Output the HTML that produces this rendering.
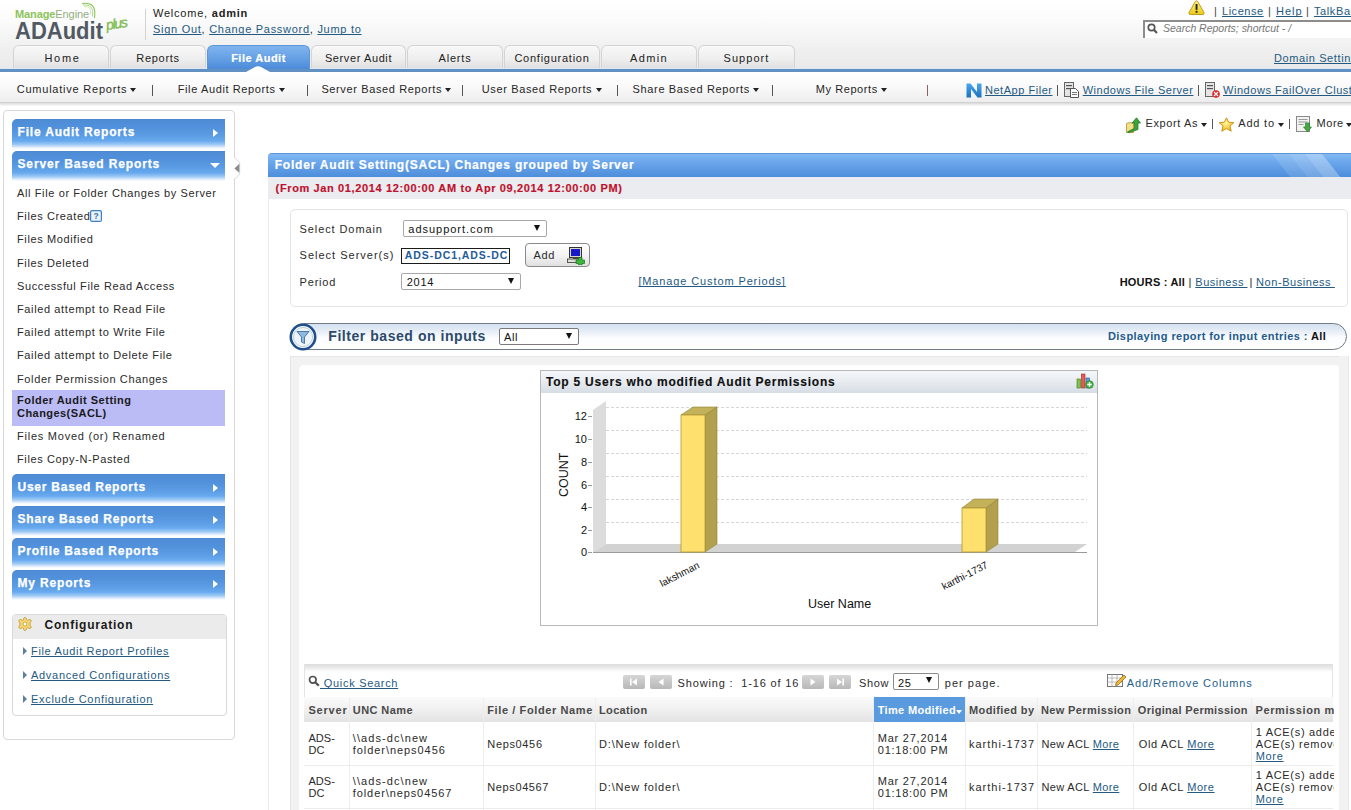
<!DOCTYPE html>
<html><head><meta charset="utf-8"><style>
*{box-sizing:border-box}
html,body{margin:0;padding:0;width:1351px;height:810px;overflow:hidden;background:#fff;font-family:"Liberation Sans",sans-serif;font-size:11px;color:#222}
.a{position:absolute}
.t{position:absolute;white-space:pre;line-height:20px}
.lk{color:#245a82;text-decoration:underline;text-decoration-skip-ink:none}
.tab{position:absolute;top:45px;height:25px;border:1px solid #d4d4d4;border-bottom:none;border-radius:6px 6px 0 0;background:linear-gradient(#f8f8f8,#eeeeee 55%,#dddddd)}
.tab.on{background:linear-gradient(#80b4ee,#69a3e6 45%,#4a89d8);border-color:#5c96dc}
.car{position:absolute;width:0;height:0;border-left:3px solid transparent;border-right:3px solid transparent;border-top:4px solid #222}
.ph{position:absolute;left:12px;width:213px;height:30px;border-radius:5px 0 0 0;background:linear-gradient(#4a82c8 0px,#4e8dd6 1px,#5190da 8px,#5c9de5 17px,#68aaee 22px,#a6cdf6 26px,#e3effc 28.5px,#ffffff 30px)}
.arr{position:absolute;width:0;height:0;border-top:4.5px solid transparent;border-bottom:4.5px solid transparent;border-left:5px solid #fff}
.sa{position:absolute;width:0;height:0;border-top:4px solid transparent;border-bottom:4px solid transparent;border-left:4px solid #5f7f9f}
.sel{position:absolute;border:1px solid #a8a8a8;border-radius:2px;background:#fff}
.dn{position:absolute;width:0;height:0;border-left:3.5px solid transparent;border-right:3.5px solid transparent;border-top:6px solid #111}
.pb{position:absolute;top:675px;width:22px;height:14px;border-radius:2px;background:linear-gradient(#d6d6d6,#b8b8b8)}
.pb svg{display:block}
.cv{position:absolute;top:698px;width:1px;height:112px;background:#ededed}
</style></head><body>
<div class="a" style="left:0;top:0;width:1351px;height:71px;background:linear-gradient(#ffffff 0px,#fcfcfc 18px,#efefef 50px,#e9e9e9 70px)"></div>
<div class="t" style="left:15px;top:4px;font-size:11px;letter-spacing:-0.1px"><span style="color:#8cc35a;font-weight:bold">Manage</span><span style="color:#93ad82">Engine</span></div>
<svg class="a" style="left:80px;top:1px" width="20" height="20" viewBox="0 0 20 20"><path d="M2 2.5 Q17 0 14.5 17" stroke="#8cc35a" stroke-width="1.1" fill="none"/><path d="M3 4 Q14.5 2.5 12.5 15.5" stroke="#a9d383" stroke-width="0.9" fill="none"/><path d="M4 5.5 Q12 5 10.5 13.5" stroke="#c4e2a6" stroke-width="0.8" fill="none"/></svg>
<div class="t" style="left:15px;top:19px;font-size:22px;line-height:26px;font-weight:bold;color:#515a63;transform:scaleY(1.08);transform-origin:0 100%">ADAudit</div>
<div class="t" style="left:106px;top:15px;font-size:14px;font-style:italic;color:#7cbd50;letter-spacing:-1.3px;-webkit-text-stroke:0.35px #7cbd50;transform:rotate(-9deg);transform-origin:0 50%">plus</div>
<div class="a" style="left:145px;top:9px;width:1px;height:31px;background:#d2d2d2"></div>
<div class="t" style="left:153px;top:3px;font-size:11px;color:#222;letter-spacing:0.78px;">Welcome, <b>admin</b></div>
<div class="t" style="left:153px;top:19px;font-size:11px;color:#2a2a2a;letter-spacing:0.72px;"><span class="lk">Sign Out</span>, <span class="lk">Change Password</span>, <span class="lk">Jump to</span></div>
<svg class="a" style="left:1188px;top:0px" width="17" height="15" viewBox="0 0 17 15"><defs><linearGradient id="wg" x1="0" y1="0" x2="0" y2="1"><stop offset="0" stop-color="#fff27a"/><stop offset="1" stop-color="#e9c91a"/></linearGradient></defs><path d="M8.5 0.8 Q9.3 0.8 9.8 1.7 L16 12.6 Q16.6 14.4 14.8 14.5 L2.2 14.5 Q0.4 14.4 1 12.6 L7.2 1.7 Q7.7 0.8 8.5 0.8 Z" fill="url(#wg)" stroke="#b8960c" stroke-width="0.9"/><rect x="7.6" y="4" width="1.9" height="5.8" fill="#222"/><rect x="7.6" y="10.8" width="1.9" height="1.9" fill="#222"/></svg>
<div class="t" style="left:1214px;top:1px;font-size:11px;color:#444;">|</div>
<div class="t lk" style="left:1222px;top:1px;font-size:11px;letter-spacing:0.53px;">License</div>
<div class="t" style="left:1268px;top:1px;font-size:11px;color:#444;">|</div>
<div class="t lk" style="left:1276px;top:1px;font-size:11px;letter-spacing:0.99px;">Help</div>
<div class="t" style="left:1306px;top:1px;font-size:11px;color:#444;">|</div>
<div class="t lk" style="left:1314px;top:1px;font-size:11px;letter-spacing:0.6px;">TalkBack</div>
<div class="a" style="left:1143px;top:20px;width:220px;height:18px;background:#fff;border-top:2px solid #8c8c8c;border-left:2px solid #8c8c8c"></div>
<svg class="a" style="left:1147px;top:23px" width="11" height="11" viewBox="0 0 11 11"><circle cx="4.5" cy="4.5" r="3.2" stroke="#555" stroke-width="1.7" fill="none"/><path d="M6.8 6.8 L10 10" stroke="#555" stroke-width="2.2"/></svg>
<div class="t" style="left:1163px;top:18px;font-size:10.5px;color:#777;letter-spacing:-0.01px;font-style:italic;">Search Reports; shortcut - /</div>
<div class="tab" style="left:13px;width:96px"></div>
<div class="t" style="left:14.5px;width:96px;top:48px;text-align:center;font-size:11px;color:#222;letter-spacing:1.7px">Home</div>
<div class="tab" style="left:110px;width:96px"></div>
<div class="t" style="left:110px;width:96px;top:48px;text-align:center;font-size:11px;color:#222;letter-spacing:0.7px">Reports</div>
<div class="tab on" style="left:207px;width:103px"></div>
<div class="t" style="left:207px;width:103px;top:48px;text-align:center;font-size:11px;font-weight:bold;color:#fff;letter-spacing:0.5px;-webkit-text-stroke:0.2px #fff">File Audit</div>
<div class="tab" style="left:311px;width:95px"></div>
<div class="t" style="left:311px;width:95px;top:48px;text-align:center;font-size:11px;color:#222;letter-spacing:0.6px">Server Audit</div>
<div class="tab" style="left:407px;width:96px"></div>
<div class="t" style="left:407px;width:96px;top:48px;text-align:center;font-size:11px;color:#222;letter-spacing:0.8px">Alerts</div>
<div class="tab" style="left:504px;width:96px"></div>
<div class="t" style="left:504px;width:96px;top:48px;text-align:center;font-size:11px;color:#222;letter-spacing:0.75px">Configuration</div>
<div class="tab" style="left:601px;width:96px"></div>
<div class="t" style="left:601px;width:96px;top:48px;text-align:center;font-size:11px;color:#222;letter-spacing:1.4px">Admin</div>
<div class="tab" style="left:698px;width:97px"></div>
<div class="t" style="left:698px;width:97px;top:48px;text-align:center;font-size:11px;color:#222;letter-spacing:1.05px">Support</div>
<div class="t lk" style="left:1274px;top:48px;font-size:11px;letter-spacing:0.6px;">Domain Settings</div>
<div class="a" style="left:0;top:68px;width:207px;height:1px;background:#dce8f8"></div><div class="a" style="left:310px;top:68px;width:1041px;height:1px;background:#dce8f8"></div><div class="a" style="left:0;top:69px;width:1351px;height:3px;background:#6190c2"></div>
<div class="a" style="left:0;top:72px;width:1351px;height:31px;background:linear-gradient(#ffffff,#fafafa 45%,#ececec)"></div>
<div class="a" style="left:0;top:102px;width:1351px;height:4px;background:linear-gradient(#c9c9c9,#e6e6e6 50%,#fafafa)"></div>
<svg class="a" style="left:245px;top:66px" width="26" height="6" viewBox="0 0 26 6"><path d="M1 6 L9.5 1.2 Q13 -0.6 16.5 1.2 L25 6 Z" fill="#fff"/></svg>
<div class="t" style="left:16.7px;top:79px;font-size:11px;color:#262626;letter-spacing:0.78px;">Cumulative Reports</div>
<div class="car" style="left:130px;top:88px"></div>
<div class="t" style="left:177.7px;top:79px;font-size:11px;color:#262626;letter-spacing:0.62px;">File Audit Reports</div>
<div class="car" style="left:278.5px;top:88px"></div>
<div class="t" style="left:321.4px;top:79px;font-size:11px;color:#262626;letter-spacing:0.62px;">Server Based Reports</div>
<div class="car" style="left:444.5px;top:88px"></div>
<div class="t" style="left:481.7px;top:79px;font-size:11px;color:#262626;letter-spacing:0.64px;">User Based Reports</div>
<div class="car" style="left:595.5px;top:88px"></div>
<div class="t" style="left:632.6px;top:79px;font-size:11px;color:#262626;letter-spacing:0.64px;">Share Based Reports</div>
<div class="car" style="left:753px;top:88px"></div>
<div class="t" style="left:815.8px;top:79px;font-size:11px;color:#262626;letter-spacing:0.57px;">My Reports</div>
<div class="car" style="left:881px;top:88px"></div>
<div class="a" style="left:152px;top:85px;width:1px;height:11px;background:#555"></div>
<div class="a" style="left:306.5px;top:85px;width:1px;height:11px;background:#555"></div>
<div class="a" style="left:462px;top:85px;width:1px;height:11px;background:#555"></div>
<div class="a" style="left:617px;top:85px;width:1px;height:11px;background:#555"></div>
<div class="a" style="left:771.5px;top:85px;width:1px;height:11px;background:#555"></div>
<div class="a" style="left:927px;top:85px;width:1px;height:11px;background:#8a6464"></div>
<svg class="a" style="left:966px;top:83px" width="16" height="15" viewBox="0 0 16 15"><defs><linearGradient id="ng" x1="0" y1="0" x2="0" y2="1"><stop offset="0" stop-color="#4aa8ec"/><stop offset="1" stop-color="#1d6fbf"/></linearGradient></defs><path d="M0.5 0.5 H4.5 L11 9 V0.5 H15.5 V14.5 H11.5 L5 6 V14.5 H0.5 Z" fill="url(#ng)"/></svg>
<div class="t lk" style="left:985px;top:80px;font-size:11px;letter-spacing:0.53px;">NetApp Filer</div>
<div class="a" style="left:1057px;top:85px;width:1px;height:11px;background:#555"></div>
<svg class="a" style="left:1063px;top:82px" width="16" height="16" viewBox="0 0 16 16"><rect x="1.5" y="0.5" width="9" height="14" fill="#e4e4e4" stroke="#666"/><rect x="3" y="3" width="6" height="1.2" fill="#555"/><rect x="3" y="6" width="6" height="1.2" fill="#555"/><path d="M7.5 6.5 H12.5 L15.5 9.5 V15.5 H7.5 Z" fill="#fff" stroke="#555"/><rect x="9" y="10" width="5" height="1" fill="#777"/><rect x="9" y="12" width="5" height="1" fill="#777"/></svg>
<div class="t lk" style="left:1082.7px;top:80px;font-size:11px;letter-spacing:0.52px;">Windows File Server</div>
<div class="a" style="left:1198px;top:85px;width:1px;height:11px;background:#555"></div>
<svg class="a" style="left:1204px;top:82px" width="16" height="16" viewBox="0 0 16 16"><rect x="1.5" y="0.5" width="9" height="14" fill="#e4e4e4" stroke="#666"/><rect x="3" y="3" width="6" height="1.2" fill="#555"/><rect x="3" y="6" width="6" height="1.2" fill="#555"/><circle cx="12" cy="12" r="3.8" fill="#e02020"/><path d="M10 10 L14 14 M14 10 L10 14" stroke="#fff" stroke-width="1.3"/></svg>
<div class="t lk" style="left:1223px;top:80px;font-size:11px;letter-spacing:0.55px;">Windows FailOver Cluster</div>
<div class="a" style="left:3px;top:110px;width:232px;height:630px;border:1px solid #d8d8d8;border-radius:4px;background:#fff"></div>
<svg class="a" style="left:233px;top:156px" width="9" height="25" viewBox="0 0 9 25"><path d="M0.8 1.3 L6.7 6.6 L6.7 18 L0.8 23.3 Z" fill="#fff"/><path d="M1.5 1.3 L6.7 6.6 L6.7 18 L1.5 23.3" fill="none" stroke="#d8d8d8" stroke-width="1"/><path d="M1.4 12.5 L6.3 7.8 L6.3 16.8 Z" fill="#8c8c8c"/></svg>
<div class="ph" style="top:119px"></div>
<div class="t" style="left:17.5px;top:122px;font-size:12px;color:#fff;font-weight:bold;letter-spacing:0.82px;-webkit-text-stroke:0.25px #fff;">File Audit Reports</div>
<div class="arr" style="left:213px;top:129px"></div>
<div class="ph" style="top:151px"></div>
<div class="t" style="left:17.5px;top:154px;font-size:12px;color:#fff;font-weight:bold;letter-spacing:0.86px;-webkit-text-stroke:0.25px #fff;">Server Based Reports</div>
<div class="a" style="left:210px;top:163px;width:0;height:0;border-left:5px solid transparent;border-right:5px solid transparent;border-top:5.5px solid #fff"></div>
<div class="t" style="left:17px;top:183px;font-size:11px;color:#2a2a2a;letter-spacing:0.62px;">All File or Folder Changes by Server</div>
<div class="t" style="left:17px;top:206px;font-size:11px;color:#2a2a2a;letter-spacing:0.62px;">Files Created</div>
<div class="t" style="left:17px;top:229px;font-size:11px;color:#2a2a2a;letter-spacing:0.62px;">Files Modified</div>
<div class="t" style="left:17px;top:253px;font-size:11px;color:#2a2a2a;letter-spacing:0.62px;">Files Deleted</div>
<div class="t" style="left:17px;top:276px;font-size:11px;color:#2a2a2a;letter-spacing:0.62px;">Successful File Read Access</div>
<div class="t" style="left:17px;top:299px;font-size:11px;color:#2a2a2a;letter-spacing:0.62px;">Failed attempt to Read File</div>
<div class="t" style="left:17px;top:322px;font-size:11px;color:#2a2a2a;letter-spacing:0.62px;">Failed attempt to Write File</div>
<div class="t" style="left:17px;top:345px;font-size:11px;color:#2a2a2a;letter-spacing:0.62px;">Failed attempt to Delete File</div>
<div class="t" style="left:17px;top:369px;font-size:11px;color:#2a2a2a;letter-spacing:0.62px;">Folder Permission Changes</div>
<svg class="a" style="left:90px;top:210px" width="12" height="12" viewBox="0 0 12 12"><rect x="0.6" y="0.6" width="10.8" height="10.8" rx="1.5" fill="#eaf3fc" stroke="#3f7fc0" stroke-width="1.2"/><text x="6" y="9.2" font-size="8.5" font-weight="bold" fill="#3f6f9f" text-anchor="middle" font-family="Liberation Sans">?</text></svg>
<div class="a" style="left:12px;top:390px;width:213px;height:36px;background:#bbbbf6"></div>
<div class="t" style="left:17px;top:390px;font-size:11px;color:#1a1a1a;font-weight:bold;letter-spacing:0.49px;">Folder Audit Setting</div>
<div class="t" style="left:17px;top:403px;font-size:11px;color:#1a1a1a;font-weight:bold;letter-spacing:0.45px;">Changes(SACL)</div>
<div class="t" style="left:17px;top:426px;font-size:11px;color:#2a2a2a;letter-spacing:0.76px;">Files Moved (or) Renamed</div>
<div class="t" style="left:17px;top:449px;font-size:11px;color:#2a2a2a;letter-spacing:0.62px;">Files Copy-N-Pasted</div>
<div class="ph" style="top:474px"></div>
<div class="t" style="left:17.5px;top:477px;font-size:12px;color:#fff;font-weight:bold;letter-spacing:0.76px;-webkit-text-stroke:0.25px #fff;">User Based Reports</div>
<div class="arr" style="left:213px;top:484px"></div>
<div class="ph" style="top:506px"></div>
<div class="t" style="left:17.5px;top:509px;font-size:12px;color:#fff;font-weight:bold;letter-spacing:0.81px;-webkit-text-stroke:0.25px #fff;">Share Based Reports</div>
<div class="arr" style="left:213px;top:516px"></div>
<div class="ph" style="top:538px"></div>
<div class="t" style="left:17.5px;top:541px;font-size:12px;color:#fff;font-weight:bold;letter-spacing:0.77px;-webkit-text-stroke:0.25px #fff;">Profile Based Reports</div>
<div class="arr" style="left:213px;top:548px"></div>
<div class="ph" style="top:570px"></div>
<div class="t" style="left:17.5px;top:573px;font-size:12px;color:#fff;font-weight:bold;letter-spacing:0.83px;-webkit-text-stroke:0.25px #fff;">My Reports</div>
<div class="arr" style="left:213px;top:580px"></div>
<div class="a" style="left:12px;top:614px;width:215px;height:102px;border:1px solid #d9d9d9;border-radius:4px;background:#fff;overflow:hidden"><div style="height:24px;background:#ebebeb"></div></div>
<svg class="a" style="left:17.5px;top:616.5px" width="14" height="14" viewBox="0 0 15 15"><g transform="translate(7.5 7.5) scale(0.95)"><path d="M-1.6 -6.2 A1.7 1.7 0 0 1 1.6 -6.2 L1.9 -4.6 L3.3 -4 L4.6 -5 A1.7 1.7 0 0 1 6.8 -2.7 L5.8 -1.5 L5.8 1.5 L6.8 2.7 A1.7 1.7 0 0 1 4.6 5 L3.3 4 L1.9 4.6 L1.6 6.2 A1.7 1.7 0 0 1 -1.6 6.2 L-1.9 4.6 L-3.3 4 L-4.6 5 A1.7 1.7 0 0 1 -6.8 2.7 L-5.8 1.5 L-5.8 -1.5 L-6.8 -2.7 A1.7 1.7 0 0 1 -4.6 -5 L-3.3 -4 L-1.9 -4.6 Z" fill="#f3d673" stroke="#c39a2a" stroke-width="0.9"/><circle r="2.2" fill="#fff" stroke="#c39a2a" stroke-width="0.9"/></g></svg>
<div class="t" style="left:44.5px;top:615px;font-size:12px;color:#1a1a1a;font-weight:bold;letter-spacing:0.78px;">Configuration</div>
<div class="sa" style="left:23px;top:647px"></div>
<div class="t lk" style="left:31px;top:641px;font-size:11px;letter-spacing:0.66px;">File Audit Report Profiles</div>
<div class="sa" style="left:23px;top:671px"></div>
<div class="t lk" style="left:31px;top:665px;font-size:11px;letter-spacing:0.71px;">Advanced Configurations</div>
<div class="sa" style="left:23px;top:695px"></div>
<div class="t lk" style="left:31px;top:689px;font-size:11px;letter-spacing:0.69px;">Exclude Configuration</div>
<svg class="a" style="left:1126px;top:117px" width="15" height="16" viewBox="0 0 15 16"><path d="M0.5 6.5 L4 5.5 L7.5 6.5 L7.5 15.5 L0.5 15.5 Z" fill="#f3e08a" stroke="#a8902a" stroke-width="0.8"/><path d="M1.5 15 Q4 13 8.5 11.5 L8.5 6 L6 6 L10.5 0.8 L14.5 6 L12 6 L12 12.5 Q8 14 3 15.5 Z" fill="#3aa63a" stroke="#1d6e1d" stroke-width="0.7" stroke-linejoin="round"/></svg>
<div class="t" style="left:1145.6px;top:113px;font-size:11px;color:#2a2a2a;letter-spacing:0.59px;">Export As</div>
<div class="car" style="left:1201px;top:123px"></div>
<div class="a" style="left:1212px;top:119px;width:1px;height:10px;background:#555"></div>
<svg class="a" style="left:1218px;top:117px" width="17" height="15" viewBox="0 0 17 15"><defs><radialGradient id="sg" cx="0.45" cy="0.4" r="0.6"><stop offset="0" stop-color="#fff7a0"/><stop offset="1" stop-color="#f2b81a"/></radialGradient></defs><path d="M8.5 0.8 L10.7 5.2 L15.8 5.7 L12 9 L13.2 14.2 L8.5 11.6 L3.8 14.2 L5 9 L1.2 5.7 L6.3 5.2 Z" fill="url(#sg)" stroke="#c98a10" stroke-width="0.9" stroke-linejoin="round"/></svg>
<div class="t" style="left:1238.3px;top:113px;font-size:11px;color:#2a2a2a;letter-spacing:0.78px;">Add to</div>
<div class="car" style="left:1278px;top:123px"></div>
<div class="a" style="left:1289px;top:119px;width:1px;height:10px;background:#555"></div>
<svg class="a" style="left:1296px;top:116px" width="16" height="17" viewBox="0 0 16 17"><rect x="0.5" y="0.5" width="13" height="15" fill="#f2f2f2" stroke="#888"/><rect x="2.5" y="3" width="9" height="1" fill="#9a9a9a"/><rect x="2.5" y="5.5" width="9" height="1" fill="#9a9a9a"/><rect x="2.5" y="8" width="5" height="1" fill="#9a9a9a"/><path d="M9.5 7 H13.5 V11 H15.5 L11.5 16 L7.5 11 H9.5 Z" fill="#45a845" stroke="#237a23" stroke-width="0.6"/></svg>
<div class="t" style="left:1316.6px;top:113px;font-size:11px;color:#2a2a2a;letter-spacing:0.51px;">More</div>
<div class="car" style="left:1346px;top:123px"></div>
<div class="a" style="left:268px;top:153px;width:1083px;height:24px;border-radius:4px 0 0 0;border-top:1px solid #5f95d6;background:linear-gradient(#82b9f2,#6ca7ec 35%,#4d8dda);overflow:hidden"><svg style="position:absolute;left:1004px;top:0" width="79" height="24" viewBox="0 0 79 24"><path d="M0 0 H17 L36 24 H19 Z" fill="#fff" fill-opacity="0.13"/><path d="M17 0 H33 L52 24 H36 Z" fill="#fff" fill-opacity="0.2"/><path d="M33 0 H50 L69 24 H52 Z" fill="#fff" fill-opacity="0.3"/></svg></div>
<div class="t" style="left:274.7px;top:155px;font-size:12px;color:#fff;font-weight:bold;letter-spacing:0.80px;-webkit-text-stroke:0.2px #fff;">Folder Audit Setting(SACL) Changes grouped by Server</div>
<div class="a" style="left:268px;top:177px;width:1083px;height:22px;background:#ebecf0"></div>
<div class="t" style="left:275.6px;top:178px;font-size:11px;color:#c0102c;font-weight:bold;letter-spacing:0.63px;-webkit-text-stroke:0.15px #c0102c;">(From Jan 01,2014 12:00:00 AM to Apr 09,2014 12:00:00 PM)</div>
<div class="a" style="left:268px;top:199px;width:1px;height:611px;background:#ebebeb"></div>
<div class="a" style="left:290px;top:209px;width:1058px;height:98px;border:1px solid #e4e4e4;border-radius:5px;background:#fff"></div>
<div class="t" style="left:299.6px;top:218.5px;font-size:11px;color:#2a2a2a;letter-spacing:0.90px;">Select Domain</div>
<div class="sel" style="left:403px;top:220px;width:144px;height:17px"></div>
<div class="t" style="left:408.3px;top:219px;font-size:11px;color:#111;letter-spacing:0.98px;">adsupport.com</div>
<div class="dn" style="left:533.5px;top:224.5px"></div>
<div class="t" style="left:299.6px;top:245px;font-size:11px;color:#2a2a2a;letter-spacing:1.00px;">Select Server(s)</div>
<div class="a" style="left:401px;top:248px;width:109px;height:16px;border:1.5px solid #1b1b1b;background:#fff;overflow:hidden"></div>
<div class="t" style="left:404.8px;top:245px;font-size:10.5px;color:#1f5b98;font-weight:bold;letter-spacing:0.93px;">ADS-DC1,ADS-DC</div>
<div class="a" style="left:525px;top:243px;width:65px;height:24px;border:1px solid #8a8a8a;border-radius:4px;background:linear-gradient(#ffffff,#f4f4f4 50%,#e0e0e0)"></div>
<div class="t" style="left:533.4px;top:245px;font-size:11px;color:#2a2a2a;letter-spacing:0.66px;">Add</div>
<svg class="a" style="left:567px;top:247px" width="19" height="18" viewBox="0 0 19 18"><rect x="2.5" y="0.5" width="12" height="10" fill="#d8d8c8" stroke="#333"/><rect x="4" y="2" width="9" height="7" fill="#1818c8"/><rect x="6" y="10.5" width="5" height="1.5" fill="#555"/><rect x="0.5" y="12" width="13" height="3.5" fill="#e0e0d8" stroke="#333" stroke-width="0.8"/><path d="M11.5 10.5 H15 V13 H17.5 V16.5 H15 V18 H11.5 V16.5 H9 V13 H11.5 Z" fill="#3cb83c" stroke="#1b6e1b" stroke-width="0.7"/></svg>
<div class="t" style="left:299.6px;top:271.5px;font-size:11px;color:#2a2a2a;letter-spacing:0.80px;">Period</div>
<div class="sel" style="left:401px;top:273px;width:120px;height:17px"></div>
<div class="t" style="left:406.8px;top:271.5px;font-size:11px;color:#111;letter-spacing:0.7px;">2014</div>
<div class="dn" style="left:507.5px;top:277.5px"></div>
<div class="t lk" style="left:638.4px;top:271px;font-size:11px;letter-spacing:0.88px;">[Manage Custom Periods]</div>
<div class="t" style="left:1119.7px;top:272px;font-size:11px;color:#111;font-weight:bold;letter-spacing:0.20px;">HOURS : All</div>
<div class="t" style="left:1188.5px;top:272px;font-size:11px;color:#222;">|</div>
<div class="t" style="left:1195.3px;top:272px;font-size:11px;color:#2a2a2a;letter-spacing:0.5px;"><span class="lk">Business </span></div>
<div class="t" style="left:1249.5px;top:272px;font-size:11px;color:#222;">|</div>
<div class="t" style="left:1256.1px;top:272px;font-size:11px;color:#2a2a2a;letter-spacing:0.55px;"><span class="lk">Non-Business </span></div>
<div class="a" style="left:290px;top:323px;width:1057px;height:27px;border:1px solid #737b85;border-radius:14px;background:linear-gradient(#d4e1f0,#e3ebf5 25%,#fbfcfe 55%,#ffffff)"></div>
<svg class="a" style="left:289px;top:323px" width="28" height="28" viewBox="0 0 28 28"><circle cx="14" cy="14" r="12.2" fill="#fff" stroke="#1f4f8c" stroke-width="2.6"/><circle cx="14" cy="14" r="9.6" fill="#eef4fa" stroke="#a9c2dc" stroke-width="0.8"/><path d="M8 8.5 H20 L15.5 14 V20.5 L12.5 19 V14 Z" fill="#8fb9e4" stroke="#3f6f9f" stroke-width="0.9" stroke-linejoin="round"/></svg>
<div class="t" style="left:328.3px;top:326px;font-size:14px;color:#2b4a6c;font-weight:bold;letter-spacing:0.55px;">Filter based on inputs</div>
<div class="sel" style="left:499px;top:328px;width:80px;height:17px;border-color:#7a7a7a"></div>
<div class="t" style="left:504px;top:327px;font-size:11px;color:#111;letter-spacing:0.6px;">All</div>
<div class="dn" style="left:566px;top:332.5px"></div>
<div class="t" style="left:1108px;top:325.5px;font-size:11px;color:#235a8e;font-weight:bold;letter-spacing:0.43px;">Displaying report for input entries : <span style="color:#111">All</span></div>
<div class="a" style="left:290px;top:356px;width:1059px;height:470px;border:1px solid #e6e6e6;background:#f2f2f2"></div>
<div class="a" style="left:299px;top:365px;width:1041px;height:460px;border-radius:5px;background:#fff"></div>
<div class="a" style="left:540px;top:370px;width:558px;height:256px;border:1px solid #b8b8b8;background:#fff"></div>
<div class="a" style="left:541px;top:371px;width:556px;height:22px;background:linear-gradient(#f5f7fa,#e6eaef 55%,#d7dde5)"></div>
<div class="t" style="left:546px;top:372px;font-size:12px;color:#111;font-weight:bold;letter-spacing:0.78px;-webkit-text-stroke:0.15px #111;">Top 5 Users who modified Audit Permissions</div>
<svg class="a" style="left:1076px;top:373px" width="18" height="16" viewBox="0 0 18 16"><rect x="1" y="6" width="3.5" height="9" fill="#7fc24a" stroke="#3d7d1f" stroke-width="0.6"/><rect x="5.5" y="1" width="3.5" height="14" fill="#e65c4f" stroke="#9b2b22" stroke-width="0.6"/><rect x="10" y="5" width="3.5" height="10" fill="#5aa0e0" stroke="#2a5f9a" stroke-width="0.6"/><circle cx="13.5" cy="11.5" r="3.8" fill="#48b448" stroke="#1e7a1e" stroke-width="0.6"/><path d="M13.5 9.3 V13.7 M11.3 11.5 H15.7" stroke="#fff" stroke-width="1.3"/></svg>
<svg class="a" style="left:541px;top:393px" width="556" height="232" viewBox="541 393 556 232">
 <g stroke="#d6d6d6" stroke-width="1" stroke-dasharray="3,2">
  <line x1="606" y1="407.5" x2="1087" y2="407.5"/><line x1="606" y1="430.5" x2="1087" y2="430.5"/><line x1="606" y1="453.5" x2="1087" y2="453.5"/>
  <line x1="606" y1="476.5" x2="1087" y2="476.5"/><line x1="606" y1="499.5" x2="1087" y2="499.5"/><line x1="606" y1="522.5" x2="1087" y2="522.5"/>
 </g>
 <path d="M593 552 L593 410 L606 401 L606 544 Z" fill="#dcdcdc"/>
 <path d="M593 552 L606 544 L1087 544 L1075 552 Z" fill="#d2d2d2"/>
 <line x1="593" y1="552.5" x2="1087" y2="552.5" stroke="#9a9a9a"/>
 <g stroke="#999"><line x1="588" y1="416.5" x2="592" y2="416.5"/><line x1="588" y1="439.5" x2="592" y2="439.5"/><line x1="588" y1="462.5" x2="592" y2="462.5"/><line x1="588" y1="485.5" x2="592" y2="485.5"/><line x1="588" y1="507.5" x2="592" y2="507.5"/><line x1="588" y1="530.5" x2="592" y2="530.5"/><line x1="588" y1="552.5" x2="592" y2="552.5"/></g>
 <g font-family="Liberation Sans" font-size="11" fill="#111" text-anchor="end">
  <text x="587" y="420">12</text><text x="587" y="443">10</text><text x="587" y="466">8</text><text x="587" y="489">6</text><text x="587" y="511">4</text><text x="587" y="534">2</text><text x="587" y="556">0</text>
 </g>
 <path d="M705 415 L717 407 L717 544 L705 552 Z" fill="#b3a04e" stroke="#8f7f35" stroke-width="0.6"/>
 <path d="M681 415 L693 407 L717 407 L705 415 Z" fill="#c4b25a" stroke="#8f7f35" stroke-width="0.6"/>
 <rect x="681" y="415" width="24" height="137" fill="#fde06e" stroke="#b39a36" stroke-width="0.8"/>
 <path d="M986 508 L998 499 L998 544 L986 552 Z" fill="#b3a04e" stroke="#8f7f35" stroke-width="0.6"/>
 <path d="M962 508 L974 499 L998 499 L986 508 Z" fill="#c4b25a" stroke="#8f7f35" stroke-width="0.6"/>
 <rect x="962" y="508" width="24" height="44" fill="#fde06e" stroke="#b39a36" stroke-width="0.8"/>
 <g font-family="Liberation Sans" font-size="10" fill="#111">
  <text x="0" y="0" transform="translate(662,587) rotate(-27)">lakshman</text>
  <text x="0" y="0" transform="translate(944,590) rotate(-27)">karthi-1737</text>
 </g>
 <text x="0" y="0" transform="translate(568,497) rotate(-90)" font-family="Liberation Sans" font-size="12.5" fill="#111">COUNT</text>
 <text x="808" y="608" font-family="Liberation Sans" font-size="12.5" fill="#111">User Name</text>
</svg>
<div class="a" style="left:304px;top:664px;width:1029px;height:34px;border:1px solid #e4e4e4;border-top:none;background:linear-gradient(#dcdcdc 0px,#e6e6e6 3px,#f5f5f5 6px,#ffffff 8px)"></div>
<svg class="a" style="left:308px;top:675px" width="12" height="12" viewBox="0 0 12 12"><circle cx="4.8" cy="4.8" r="3.3" stroke="#505050" stroke-width="1.7" fill="none"/><path d="M7.2 7.2 L10.8 10.8" stroke="#505050" stroke-width="2.3"/></svg>
<div class="t" style="left:320px;top:673px;font-size:11px;color:#2a2a2a;letter-spacing:0.7px;"><span class="lk"> Quick Search</span></div>
<div class="pb" style="left:623px"><svg width="22" height="14" viewBox="0 0 22 14"><rect x="7" y="3.5" width="1.6" height="7" fill="#fff"/><path d="M14 3.5 L9 7 L14 10.5 Z" fill="#fff"/></svg></div>
<div class="pb" style="left:650px"><svg width="22" height="14" viewBox="0 0 22 14"><path d="M13.5 3.5 L8.5 7 L13.5 10.5 Z" fill="#fff"/></svg></div>
<div class="t" style="left:677.6px;top:673px;font-size:11px;color:#2a2a2a;letter-spacing:0.84px;">Showing :  1-16 of 16</div>
<div class="pb" style="left:802px"><svg width="22" height="14" viewBox="0 0 22 14"><path d="M8.5 3.5 L13.5 7 L8.5 10.5 Z" fill="#fff"/></svg></div>
<div class="pb" style="left:829px"><svg width="22" height="14" viewBox="0 0 22 14"><path d="M8 3.5 L13 7 L8 10.5 Z" fill="#fff"/><rect x="13.4" y="3.5" width="1.6" height="7" fill="#fff"/></svg></div>
<div class="t" style="left:859px;top:673px;font-size:11px;color:#2a2a2a;letter-spacing:0.66px;">Show</div>
<div class="sel" style="left:893px;top:673px;width:46px;height:17px;border-color:#8a8a8a"></div>
<div class="t" style="left:898px;top:672.5px;font-size:11px;color:#111;letter-spacing:0.6px;">25</div>
<div class="dn" style="left:925.5px;top:677px"></div>
<div class="t" style="left:944.8px;top:673px;font-size:11px;color:#2a2a2a;letter-spacing:1.03px;">per page.</div>
<svg class="a" style="left:1107px;top:673px" width="20" height="15" viewBox="0 0 20 15"><rect x="0.5" y="1.5" width="15" height="12" fill="#fff" stroke="#777"/><path d="M0.5 5 H15.5 M0.5 9 H15.5 M5 1.5 V13.5 M10 1.5 V13.5" stroke="#aaa" stroke-width="0.8"/><path d="M9 10 L17 2 L19 4 L11 12 L8.5 12.5 Z" fill="#f0b830" stroke="#8a6010" stroke-width="0.7"/></svg>
<div class="t" style="left:1126.8px;top:673px;font-size:11px;color:#255f8c;letter-spacing:0.88px;">Add/Remove Columns</div>
<div class="a" style="left:304px;top:697px;width:1029px;height:25px;background:linear-gradient(#fbfbfb,#f0f0f0 50%,#e3e3e3)"></div>
<div class="a" style="left:874px;top:697px;width:91px;height:25px;background:#5a9be0"></div>
<div class="cv" style="left:349px"></div>
<div class="cv" style="left:483px"></div>
<div class="cv" style="left:595px"></div>
<div class="cv" style="left:873px"></div>
<div class="cv" style="left:965px"></div>
<div class="cv" style="left:1037px"></div>
<div class="cv" style="left:1133px"></div>
<div class="cv" style="left:1251px"></div>
<div class="a" style="left:304px;top:765px;width:1029px;height:1px;background:#ececec"></div>
<div class="a" style="left:304px;top:808px;width:1029px;height:1px;background:#ececec"></div>
<div class="t" style="left:308.4px;top:700px;font-size:11px;color:#4a4a4a;font-weight:bold;letter-spacing:0.81px;">Server</div>
<div class="t" style="left:352.8px;top:700px;font-size:11px;color:#4a4a4a;font-weight:bold;letter-spacing:0.42px;">UNC Name</div>
<div class="t" style="left:487.3px;top:700px;font-size:11px;color:#4a4a4a;font-weight:bold;letter-spacing:0.60px;">File / Folder Name</div>
<div class="t" style="left:599.1px;top:700px;font-size:11px;color:#4a4a4a;font-weight:bold;letter-spacing:0.31px;">Location</div>
<div class="t" style="left:877.7px;top:700px;font-size:11px;color:#fff;font-weight:bold;letter-spacing:0.35px;">Time Modified</div>
<div class="a" style="left:956px;top:710px;width:0;height:0;border-left:3px solid transparent;border-right:3px solid transparent;border-top:4px solid #fff"></div>
<div class="t" style="left:969px;top:700px;font-size:11px;color:#4a4a4a;font-weight:bold;letter-spacing:0.39px;">Modified by</div>
<div class="t" style="left:1040.9px;top:700px;font-size:11px;color:#4a4a4a;font-weight:bold;letter-spacing:0.39px;">New Permission</div>
<div class="t" style="left:1137.8px;top:700px;font-size:11px;color:#4a4a4a;font-weight:bold;letter-spacing:0.32px;">Original Permission</div>
<div class="a" style="left:1254px;top:698px;width:80px;height:24px;overflow:hidden"><div class="t" style="left:1.5px;top:2px;font-size:11px;font-weight:bold;color:#4a4a4a;letter-spacing:0.6px">Permission modified</div></div>
<div class="t" style="left:308.4px;top:728px;font-size:11px;color:#2a2a2a;letter-spacing:0.07px;">ADS-</div>
<div class="t" style="left:308.4px;top:740px;font-size:11px;color:#2a2a2a;letter-spacing:0.21px;">DC</div>
<div class="t" style="left:352.8px;top:728px;font-size:11px;color:#2a2a2a;letter-spacing:1.08px;">\\ads-dc\new</div>
<div class="t" style="left:352.8px;top:740px;font-size:11px;color:#2a2a2a;letter-spacing:0.94px;">folder\neps0456</div>
<div class="t" style="left:487.3px;top:734px;font-size:11px;color:#2a2a2a;letter-spacing:0.65px;">Neps0456</div>
<div class="t" style="left:599px;top:734px;font-size:11px;color:#2a2a2a;letter-spacing:0.83px;">D:\New folder\</div>
<div class="t" style="left:877.8px;top:728px;font-size:11px;color:#2a2a2a;letter-spacing:0.76px;">Mar 27,2014</div>
<div class="t" style="left:877.8px;top:740px;font-size:11px;color:#2a2a2a;letter-spacing:0.75px;">01:18:00 PM</div>
<div class="t" style="left:969px;top:734px;font-size:11px;color:#2a2a2a;letter-spacing:1.00px;">karthi-1737</div>
<div class="t" style="left:1041.4px;top:734px;font-size:11px;color:#2a2a2a;letter-spacing:0.36px;">New ACL <span class="lk">More</span></div>
<div class="t" style="left:1138.8px;top:734px;font-size:11px;color:#2a2a2a;letter-spacing:0.59px;">Old ACL <span class="lk">More</span></div>
<div class="a" style="left:1254px;top:724px;width:80px;height:41px;overflow:hidden"><div class="t" style="left:1.7px;top:-2px;font-size:11px;letter-spacing:0.7px;color:#2a2a2a">1 ACE(s) added</div><div class="t" style="left:1.7px;top:10px;font-size:11px;letter-spacing:0.7px;color:#2a2a2a">ACE(s) removed</div><div class="t" style="left:1.7px;top:22px;font-size:11px;letter-spacing:0.7px"><span class="lk">More</span></div></div>
<div class="t" style="left:308.4px;top:771px;font-size:11px;color:#2a2a2a;letter-spacing:0.07px;">ADS-</div>
<div class="t" style="left:308.4px;top:783px;font-size:11px;color:#2a2a2a;letter-spacing:0.21px;">DC</div>
<div class="t" style="left:352.8px;top:771px;font-size:11px;color:#2a2a2a;letter-spacing:1.08px;">\\ads-dc\new</div>
<div class="t" style="left:352.8px;top:783px;font-size:11px;color:#2a2a2a;letter-spacing:0.90px;">folder\neps04567</div>
<div class="t" style="left:487.3px;top:777px;font-size:11px;color:#2a2a2a;letter-spacing:0.61px;">Neps04567</div>
<div class="t" style="left:599px;top:777px;font-size:11px;color:#2a2a2a;letter-spacing:0.83px;">D:\New folder\</div>
<div class="t" style="left:877.8px;top:771px;font-size:11px;color:#2a2a2a;letter-spacing:0.76px;">Mar 27,2014</div>
<div class="t" style="left:877.8px;top:783px;font-size:11px;color:#2a2a2a;letter-spacing:0.75px;">01:18:00 PM</div>
<div class="t" style="left:969px;top:777px;font-size:11px;color:#2a2a2a;letter-spacing:1.00px;">karthi-1737</div>
<div class="t" style="left:1041.4px;top:777px;font-size:11px;color:#2a2a2a;letter-spacing:0.36px;">New ACL <span class="lk">More</span></div>
<div class="t" style="left:1138.8px;top:777px;font-size:11px;color:#2a2a2a;letter-spacing:0.59px;">Old ACL <span class="lk">More</span></div>
<div class="a" style="left:1254px;top:767px;width:80px;height:41px;overflow:hidden"><div class="t" style="left:1.7px;top:-2px;font-size:11px;letter-spacing:0.7px;color:#2a2a2a">1 ACE(s) added</div><div class="t" style="left:1.7px;top:10px;font-size:11px;letter-spacing:0.7px;color:#2a2a2a">ACE(s) removed</div><div class="t" style="left:1.7px;top:22px;font-size:11px;letter-spacing:0.7px"><span class="lk">More</span></div></div>
<div class="a" style="left:1339px;top:356px;width:10px;height:454px;background:#f2f2f2;border-right:1px solid #e6e6e6"></div>
</body></html>
